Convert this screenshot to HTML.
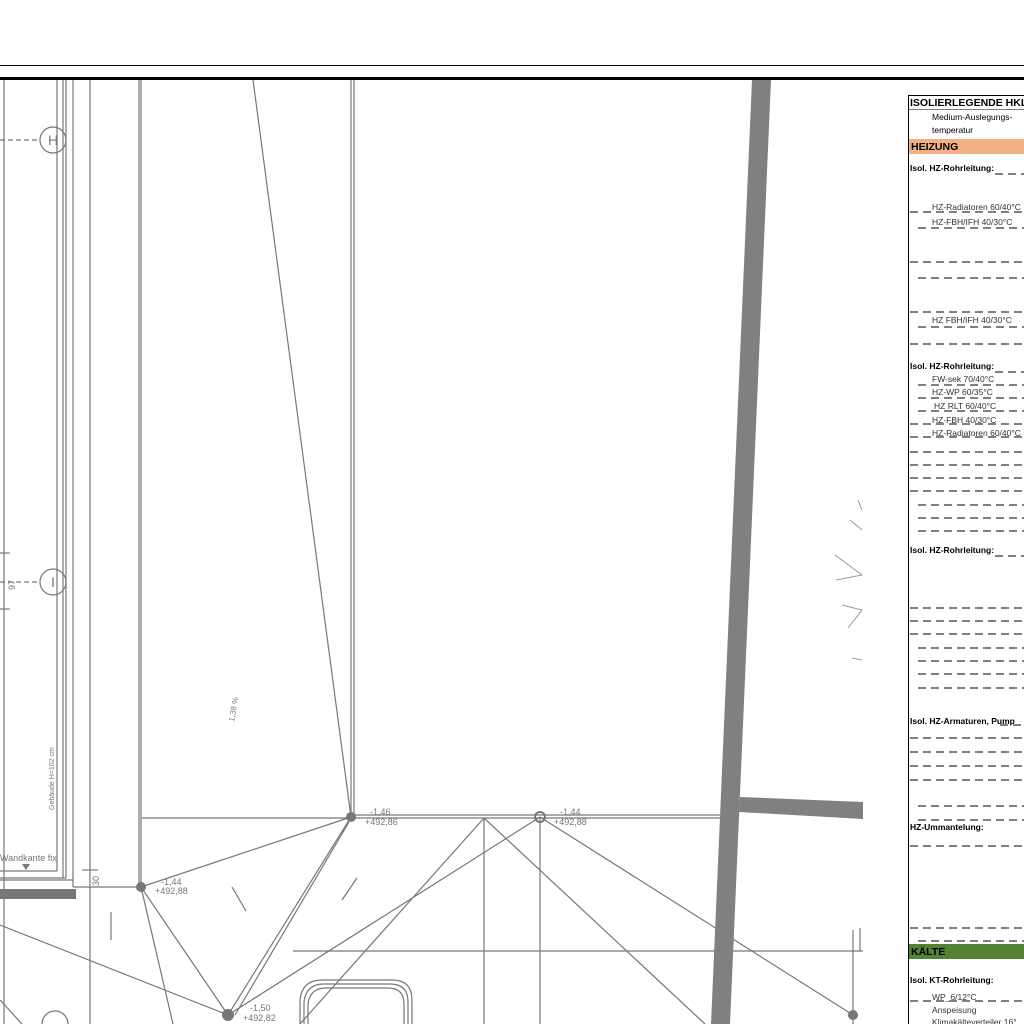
<!DOCTYPE html>
<html><head><meta charset="utf-8"><style>
html,body{margin:0;padding:0;background:#fff;width:1024px;height:1024px;overflow:hidden}
svg{display:block}
.t{font-family:"Liberation Sans",sans-serif;fill:#777}
.lg{font-family:"Liberation Sans",sans-serif;fill:#000}
</style></head><body>
<svg width="1024" height="1024" viewBox="0 0 1024 1024" xmlns="http://www.w3.org/2000/svg">
<rect width="1024" height="1024" fill="#fff"/>
<line x1="0" y1="65.5" x2="1024" y2="65.5" stroke="#000" stroke-width="1"/>
<rect x="0" y="77" width="1024" height="3" fill="#000"/>
<g stroke="#777" stroke-width="1.2" fill="none">
<line x1="4" y1="80" x2="4" y2="1024"/>
<line x1="57" y1="80" x2="57" y2="871"/>
<line x1="63" y1="80" x2="63" y2="878"/>
<line x1="66" y1="80" x2="66" y2="878"/>
<line x1="73" y1="80" x2="73" y2="887"/>
<line x1="90" y1="80" x2="90" y2="1024"/>
<line x1="139" y1="80" x2="139" y2="887"/>
<line x1="141" y1="80" x2="141" y2="887"/>
<line x1="351" y1="80" x2="351" y2="817"/>
<line x1="354" y1="80" x2="354" y2="817"/>
<line x1="253" y1="80" x2="351" y2="817"/>
<line x1="142" y1="818" x2="720" y2="818"/>
<line x1="354" y1="815" x2="720" y2="815"/>
<line x1="0" y1="871" x2="57" y2="871"/>
<line x1="0" y1="878" x2="66" y2="878"/>
<line x1="0" y1="880" x2="73" y2="880"/>
<line x1="73" y1="887" x2="141" y2="887"/>
<line x1="484" y1="818" x2="484" y2="1024"/>
<line x1="540" y1="818" x2="540" y2="1024"/>
<line x1="293" y1="951" x2="863" y2="951"/>
<line x1="141" y1="887" x2="351" y2="817"/>
<line x1="141" y1="887" x2="228" y2="1015"/>
<line x1="141" y1="887" x2="173" y2="1024"/>
<line x1="351" y1="817" x2="228" y2="1015"/>
<line x1="349" y1="822" x2="235" y2="1015"/>
<line x1="540" y1="817" x2="228" y2="1015"/>
<line x1="540" y1="817" x2="853" y2="1015"/>
<line x1="484" y1="818" x2="300" y2="1024"/>
<line x1="484" y1="818" x2="705" y2="1024"/>
<line x1="0" y1="925" x2="228" y2="1015"/>
<line x1="0" y1="1000" x2="22" y2="1024"/>
<line x1="853" y1="930" x2="853" y2="1024"/>
<line x1="860" y1="928" x2="860" y2="951"/>
<line x1="111" y1="912" x2="111" y2="940"/>
<line x1="232" y1="887" x2="246" y2="911"/>
<line x1="357" y1="878" x2="342" y2="900"/>
<line x1="0" y1="140" x2="40" y2="140" stroke-dasharray="5,3"/>
<line x1="0" y1="582" x2="40" y2="582" stroke-dasharray="5,3"/>
<circle cx="53" cy="140" r="13"/>
<circle cx="53" cy="582" r="13"/>
<circle cx="55" cy="1024" r="13"/>
<line x1="0" y1="553" x2="10" y2="553"/>
<line x1="0" y1="609" x2="10" y2="609"/>
<line x1="82" y1="870" x2="98" y2="870"/>
<path d="M300 1024 V1000 Q302 980 322 980 H392 Q412 980 412 1000 V1024"/>
<path d="M304 1024 V1002 Q306 984 324 984 H390 Q408 984 408 1002 V1024"/>
<path d="M308 1024 V1004 Q310 988 326 988 H388 Q404 988 404 1004 V1024"/>
</g>
<g fill="#777">
<circle cx="141" cy="887" r="5"/><circle cx="351" cy="817" r="5"/>
<circle cx="540" cy="817" r="5" fill="none" stroke="#777" stroke-width="2"/>
<circle cx="228" cy="1015" r="6"/><circle cx="853" cy="1015" r="5"/>
<rect x="0" y="889" width="76" height="10"/>
<polygon points="22,864 30,864 26,870"/>
<polygon points="752,80 771,80 730,1024 711,1024" fill="#808080"/>
<polygon points="740,797 863,802 863,819 739,812" fill="#808080"/>
</g>
<g class="t" font-size="9">
<text x="53" y="145" text-anchor="middle" font-size="14">H</text>
<text x="53" y="587" text-anchor="middle" font-size="14">I</text>
<text x="0" y="861" font-size="9">Wandkante fix</text>
<text x="370" y="815">-1,46</text><text x="365" y="825">+492,86</text>
<text x="560" y="815">-1,44</text><text x="554" y="825">+492,88</text>
<text x="161" y="885">-1,44</text><text x="155" y="894">+492,88</text>
<text x="250" y="1011">-1,50</text><text x="243" y="1021">+492,82</text>
<text transform="translate(54,810) rotate(-90)" font-size="7">Gebäude H=102 cm</text>
<text transform="translate(234,722) rotate(-80)" font-size="8">1,38 %</text>
<text transform="translate(99,886) rotate(-90)" font-size="9">30</text>
<text transform="translate(15,590) rotate(-90)" font-size="9">97</text>
</g>
<rect x="863" y="80" width="161" height="944" fill="#fff"/>
<g stroke="#999" stroke-width="1" fill="none">
<path d="M858 500 L862 510 M850 520 L862 530 M835 555 L862 575 L836 580 M842 605 L862 610 L848 628 M852 658 L862 660"/>
</g>
<line x1="908.5" y1="95" x2="908.5" y2="1024" stroke="#000"/>
<line x1="908" y1="95.5" x2="1024" y2="95.5" stroke="#000"/>
<line x1="908" y1="109.5" x2="1024" y2="109.5" stroke="#000" stroke-width=".6"/>
<rect x="909" y="139" width="115" height="15" fill="#f4b183"/>
<rect x="909" y="944" width="115" height="15" fill="#548235"/>
<g stroke="#000" stroke-width="1" stroke-dasharray="8,5">
<path d="M995 174H1024 M910 212H1024 M918 228H1024 M910 262H1024 M918 278H1024 M910 312H1024 M918 327H1024 M910 344H1024 M995 372H1024 M918 385H1024 M918 398H1024 M918 411H1024 M910 424H1024 M910 437H1024 M910 452H1024 M910 465H1024 M910 478H1024 M910 491H1024 M918 505H1024 M918 518H1024 M918 531H1024 M995 556H1024 M910 608H1024 M910 621H1024 M910 634H1024 M918 648H1024 M918 661H1024 M918 674H1024 M918 688H1024 M1000 725H1024 M910 738H1024 M910 752H1024 M910 766H1024 M910 780H1024 M918 806H1024 M918 820H1024 M910 846H1024 M910 928H1024 M918 941H1024 M910 1001H1024"/>
</g>
<g class="lg" font-size="9">
<text x="910" y="106" font-weight="bold" font-size="10.5">ISOLIERLEGENDE HKLS</text>
<text x="932" y="120" font-size="8.5">Medium-Auslegungs-</text>
<text x="932" y="133" font-size="8.5">temperatur</text>
<text x="911" y="150" font-size="10.5" font-weight="bold">HEIZUNG</text>
<text x="911" y="955" font-size="10.5" font-weight="bold">KÄLTE</text>
<g font-weight="bold" font-size="8.5">
<text x="910" y="171">Isol.  HZ-Rohrleitung:</text>
<text x="910" y="369">Isol.  HZ-Rohrleitung:</text>
<text x="910" y="553">Isol.  HZ-Rohrleitung:</text>
<text x="910" y="724">Isol.  HZ-Armaturen, Pump</text>
<text x="910" y="830">HZ-Ummantelung:</text>
<text x="910" y="983">Isol.  KT-Rohrleitung:</text>
</g>
<g font-size="8.5" fill="#333">
<text x="932" y="210">HZ-Radiatoren 60/40°C</text>
<text x="932" y="225">HZ-FBH/IFH 40/30°C</text>
<text x="932" y="323">HZ FBH/IFH 40/30°C</text>
<text x="932" y="382">FW-sek 70/40°C</text>
<text x="932" y="395">HZ-WP 60/35°C</text>
<text x="934" y="409">HZ RLT 60/40°C</text>
<text x="932" y="423">HZ-FBH 40/30°C</text>
<text x="932" y="436">HZ-Radiatoren 60/40°C</text>
<text x="932" y="1000">WP_6/12°C</text>
<text x="932" y="1013">Anspeisung</text>
<text x="932" y="1025">Klimakälteverteiler 16°</text>
</g>
</g>
</svg>
</body></html>
